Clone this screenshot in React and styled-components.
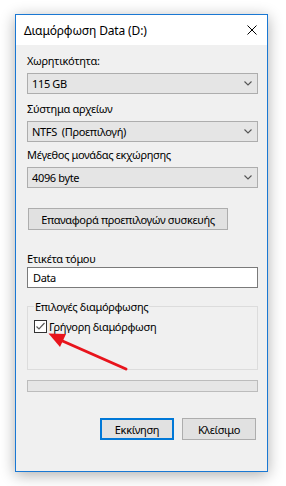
import React from "react";
import styled, { createGlobalStyle } from "styled-components";

const Global = createGlobalStyle`
  html, body { margin: 0; padding: 0; background: #ffffff; }
  body {
    font-family: "Noto Sans", "Open Sans", sans-serif;
    font-size: 11px;
    letter-spacing: -0.35px;
    color: #000;
  }
  * { box-sizing: border-box; }
`;

const Page = styled.div`
  width: 286px;
  height: 486px;
  padding: 14px 0 0 15px;
  position: relative;
  overflow: hidden;
`;

const Window = styled.div`
  width: 253px;
  height: 458px;
  border: 1px solid #1a78d3;
  background: #f0f0f0;
  box-shadow: 0 3px 14px rgba(0, 0, 0, 0.32);
  display: flex;
  flex-direction: column;
`;

const TitleBar = styled.div`
  height: 30px;
  background: #ffffff;
  display: flex;
  align-items: center;
  justify-content: space-between;
  padding: 0 10px 0 8px;
  flex-shrink: 0;
`;

const Title = styled.span`
  font-size: 12px;
  line-height: 15px;
  letter-spacing: -0.15px;
`;

const CloseIcon = styled.svg`
  width: 10px;
  height: 10px;
  display: block;
`;

const Body = styled.div`
  flex: 1;
  display: flex;
  flex-direction: column;
  padding: 8px 9px 0 11px;
`;

const Field = styled.div`
  display: flex;
  flex-direction: column;
  gap: ${(p) => p.$gap ?? 5}px;
  margin-top: ${(p) => p.$top ?? 0}px;
`;

const Label = styled.div`
  line-height: 15px;
  height: 15px;
  white-space: nowrap;
`;

const Combo = styled.div`
  height: 21px;
  border: 1px solid #adadad;
  background: #e5e5e5;
  display: flex;
  align-items: center;
  justify-content: space-between;
  padding: 0 5px 0 4px;
`;

const Chevron = styled.svg`
  width: 8px;
  height: 5px;
  display: block;
`;

const Button = styled.button`
  font: inherit;
  letter-spacing: inherit;
  color: #000;
  height: 22px;
  width: ${(p) => p.$w}px;
  background: #e1e1e1;
  border: ${(p) => (p.$primary ? "2px solid #0078d7" : "1px solid #adadad")};
  padding: 0;
  margin: 0;
  white-space: nowrap;
`;

const ResetButton = styled(Button)`
  margin-top: 20px;
  margin-left: 1px;
  align-self: flex-start;
`;

const TextInput = styled.div`
  height: 21px;
  border: 1px solid #7a7a7a;
  background: #ffffff;
  display: flex;
  align-items: center;
  padding: 0 5px;
`;

const Group = styled.fieldset`
  margin: 11px 0 0 0;
  padding: 6px 6px 0 6px;
  height: 71px;
  border: 1px solid #dcdcdc;
  border-radius: 0;
  min-width: 0;
`;

const Legend = styled.legend`
  padding: 0 1px;
  line-height: 15px;
`;

const CheckRow = styled.div`
  display: flex;
  align-items: center;
  gap: 2px;
  margin-top: -1px;
`;

const CheckBox = styled.div`
  width: 13px;
  height: 13px;
  border: 1px solid #333333;
  background: #ffffff;
  display: flex;
  align-items: center;
  justify-content: center;
`;

const Progress = styled.div`
  margin-top: 10px;
  height: 12px;
  border: 1px solid #bcbcbc;
  background: #e6e6e6;
`;

const Footer = styled.div`
  margin-top: 26px;
  display: flex;
  justify-content: flex-end;
  gap: 8px;
  padding-right: 2px;
`;

const Arrow = styled.svg`
  position: absolute;
  left: 0;
  top: 0;
  width: 286px;
  height: 486px;
  pointer-events: none;
`;

function ChevronIcon() {
  return (
    <Chevron viewBox="0 0 8 5">
      <path d="M0.5 0.5 L4 4 L7.5 0.5" stroke="#555" strokeWidth="1.1" fill="none" />
    </Chevron>
  );
}

export default function App() {
  return (
    <>
      <Global />
      <Page>
        <Window>
          <TitleBar>
            <Title>Διαμόρφωση Data (D:)</Title>
            <CloseIcon viewBox="0 0 10 10">
              <path d="M0.5 0.5 L9.5 9.5 M9.5 0.5 L0.5 9.5" stroke="#000" strokeWidth="1" fill="none" />
            </CloseIcon>
          </TitleBar>
          <Body>
            <Field>
              <Label>Χωρητικότητα:</Label>
              <Combo>
                <span>115 GB</span>
                <ChevronIcon />
              </Combo>
            </Field>
            <Field $top={7}>
              <Label>Σύστημα αρχείων</Label>
              <Combo>
                <span>NTFS&nbsp; (Προεπιλογή)</span>
                <ChevronIcon />
              </Combo>
            </Field>
            <Field $top={5}>
              <Label>Μέγεθος μονάδας εκχώρησης</Label>
              <Combo>
                <span>4096 byte</span>
                <ChevronIcon />
              </Combo>
            </Field>
            <ResetButton $w={200}>Επαναφορά προεπιλογών συσκευής</ResetButton>
            <Field $top={21} $gap={1}>
              <Label>Ετικέτα τόμου</Label>
              <TextInput>Data</TextInput>
            </Field>
            <Group>
              <Legend>Επιλογές διαμόρφωσης</Legend>
              <CheckRow>
                <CheckBox>
                  <svg width="11" height="11" viewBox="0 0 11 11">
                    <path d="M1.5 5.5 L4 8 L9.5 2" stroke="#5a5a5a" strokeWidth="1.2" fill="none" />
                  </svg>
                </CheckBox>
                <span>Γρήγορη διαμόρφωση</span>
              </CheckRow>
            </Group>
            <Progress />
            <Footer>
              <Button $w={74} $primary>Εκκίνηση</Button>
              <Button $w={74}>Κλείσιμο</Button>
            </Footer>
          </Body>
        </Window>
        <Arrow viewBox="0 0 286 486">
          <path d="M126 369 L58 339" stroke="#e8141c" strokeWidth="3" strokeLinecap="round" fill="none" />
          <path d="M48.5 333.5 L66 334 L60 347 Z" fill="#e8141c" />
        </Arrow>
      </Page>
    </>
  );
}
